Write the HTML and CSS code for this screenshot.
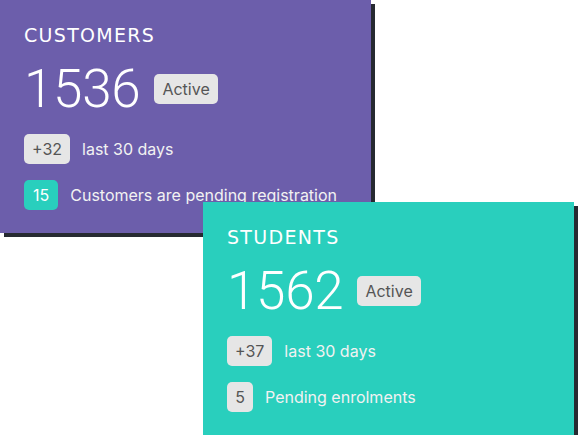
FILE: index.html
```html
<!DOCTYPE html>
<html lang="en">
<head>
  <meta charset="UTF-8">
  <title>Stats cards</title>
  <link rel="stylesheet" href="styles.css">
</head>
<body>
  <div class="board">
    <!-- customers -->
    <div class="card purple">
      <h2>Customers</h2>
      <div class="total">
        <span class="count">1536</span>
        <span class="tag">Active</span>
      </div>
      <div class="line"><span class="tag">+32</span> last 30 days</div>
      <div class="line"><span class="tag teal">15</span> Customers are pending registration</div>
    </div>

    <!-- students -->
    <div class="card green">
      <h2>Students</h2>
      <div class="total">
        <span class="count">1562</span>
        <span class="tag">Active</span>
      </div>
      <div class="line"><span class="tag">+37</span> last 30 days</div>
      <div class="line"><span class="tag">5</span> Pending enrolments</div>
    </div>
  </div>
</body>
</html>
```

FILE: styles.css
```css
body {
  margin: 0;
  background-color: #fff;
  font-family: Inter, Arial, sans-serif;
}
.board {
  display: flex;
  flex-direction: column;
  width: 578px;
}
.card {
  width: 371px;
  height: 233px;
  box-sizing: border-box;
  padding: 23px 24px 0;
  color: #fff;
  box-shadow: 4px 4px 0 #262a31;
}
.purple { background-color: #6c5eab; }
.green {
  background-color: #29cfbd;
  margin: -31px 0 0 203px;
}
h2 {
  margin: 0;
  font-family: "DejaVu Sans", sans-serif;
  font-weight: normal;
  font-size: 19px;
  letter-spacing: 1.3px;
  line-height: 24px;
  text-transform: uppercase;
}
.total {
  display: flex;
  align-items: center;
  gap: 14px;
  margin-top: 12px;
  height: 60px;
}
.count {
  font-family: Roboto, sans-serif;
  font-size: 53px;
  font-weight: 300;
  letter-spacing: -0.3px;
  line-height: 60px;
}
.tag {
  display: inline-block;
  min-width: 26px;
  box-sizing: border-box;
  height: 30px;
  line-height: 30px;
  padding: 0 8px;
  border-radius: 5px;
  background-color: #e6e6e6;
  color: #555;
  font-size: 16px;
  text-align: center;
}
.tag.teal {
  padding: 0 9px;
  background-color: #29cfbd;
  color: #fff;
}
.line {
  display: flex;
  align-items: center;
  gap: 12px;
  margin-top: 16px;
  font-size: 16px;
  color: #f2f2f2;
}
.total + .line { margin-top: 15px; }
```
